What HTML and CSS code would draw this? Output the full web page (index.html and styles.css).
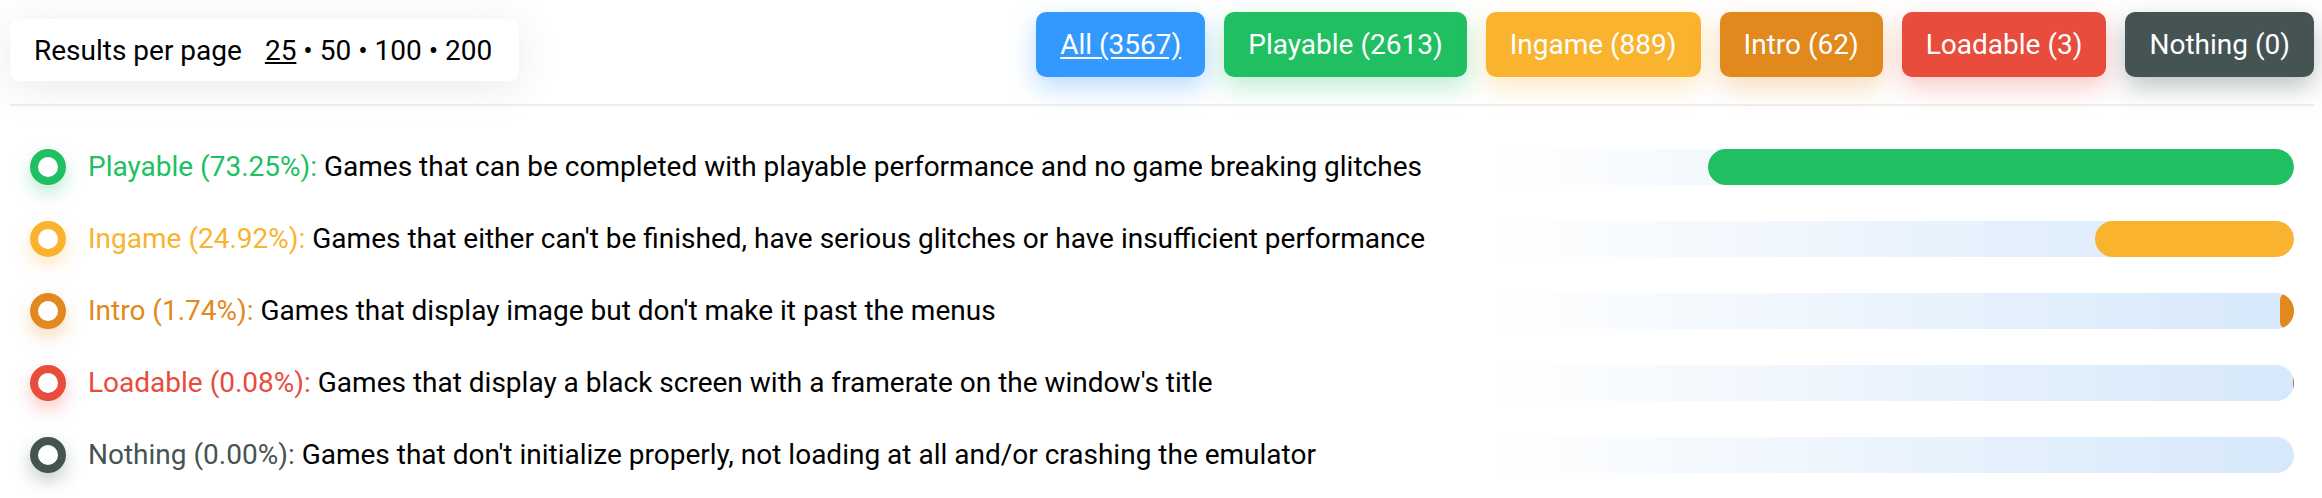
FILE: index.html
```html
<!DOCTYPE html>
<html lang="en">
<head>
    <meta charset="UTF-8">
    <title>Compatibility</title>
    <link rel="stylesheet" href="styles.css">
</head>
<body>
    <div class="page">
        <div class="toolbar">
            <div class="per-page">
                <span class="per-page-label">Results per page</span>
                <span class="per-page-options"><a class="current">25</a> • <a>50</a> • <a>100</a> • <a>200</a></span>
            </div>
            <div class="filters">
                <a class="filter all active">All (3567)</a>
                <a class="filter playable">Playable (2613)</a>
                <a class="filter ingame">Ingame (889)</a>
                <a class="filter intro">Intro (62)</a>
                <a class="filter loadable">Loadable (3)</a>
                <a class="filter nothing">Nothing (0)</a>
            </div>
        </div>

        <ul class="status-list">
            <li class="status playable">
                <span class="dot"></span>
                <p class="status-text"><span class="status-name">Playable (73.25%):</span> Games that can be completed with playable performance and no game breaking glitches</p>
                <div class="track"><div class="fill" style="width: 73.25%"></div></div>
            </li>
            <li class="status ingame">
                <span class="dot"></span>
                <p class="status-text"><span class="status-name">Ingame (24.92%):</span> Games that either can't be finished, have serious glitches or have insufficient performance</p>
                <div class="track"><div class="fill" style="width: 24.92%"></div></div>
            </li>
            <li class="status intro">
                <span class="dot"></span>
                <p class="status-text"><span class="status-name">Intro (1.74%):</span> Games that display image but don't make it past the menus</p>
                <div class="track"><div class="fill" style="width: 1.74%"></div></div>
            </li>
            <li class="status loadable">
                <span class="dot"></span>
                <p class="status-text"><span class="status-name">Loadable (0.08%):</span> Games that display a black screen with a framerate on the window's title</p>
                <div class="track"><div class="fill" style="width: 0.08%"></div></div>
            </li>
            <li class="status nothing">
                <span class="dot"></span>
                <p class="status-text"><span class="status-name">Nothing (0.00%):</span> Games that don't initialize properly, not loading at all and/or crashing the emulator</p>
                <div class="track"><div class="fill" style="width: 0%"></div></div>
            </li>
        </ul>
    </div>
</body>
</html>
```

FILE: styles.css
```css
body {
    font-family: Roboto, "Liberation Sans", sans-serif;
    background-color: #fff;
    color: #000;
    margin: 0;
    padding: 0;
}

.page {
    padding: 0 8px 0 10px;
}

/* top bar */

.toolbar {
    display: flex;
    justify-content: space-between;
    align-items: flex-start;
    padding: 12px 0 23px;
    border-bottom: 2px solid #eeeeee;
}

.per-page {
    display: flex;
    align-items: center;
    gap: 23px;
    height: 62px;
    margin-top: 7px;
    padding: 0 27px 0 24px;
    background-color: #fff;
    border-radius: 9px;
    box-shadow: 0 6px 45px rgba(0, 0, 0, 0.09);
    font-size: 28px;
}

.per-page-options a {
    color: #000;
}

.per-page-options a.current {
    text-decoration: underline;
}

.filters {
    display: flex;
    gap: 19px;
}

.filter {
    display: block;
    padding: 16px 24px;
    line-height: 33px;
    font-size: 28px;
    color: #fff;
    border-radius: 10px;
    text-decoration: none;
    cursor: pointer;
}

.filter.active {
    text-decoration: underline;
    text-underline-offset: 3px;
}

.filter.all { background-color: #3399ff; box-shadow: 0 10px 26px rgba(51, 153, 255, 0.35); }
.filter.playable { background-color: #20bf62; box-shadow: 0 10px 26px rgba(32, 191, 98, 0.3); }
.filter.ingame { background-color: #f9b32f; box-shadow: 0 10px 26px rgba(249, 179, 47, 0.3); }
.filter.intro { background-color: #e1891d; box-shadow: 0 10px 26px rgba(225, 137, 29, 0.3); }
.filter.loadable { background-color: #e74c3c; box-shadow: 0 10px 26px rgba(231, 76, 60, 0.3); }
.filter.nothing { background-color: #455453; box-shadow: 0 10px 26px rgba(69, 84, 83, 0.35); }

/* status rows */

.status-list {
    list-style: none;
    margin: 0;
    padding: 43px 20px 0;
}

.status {
    display: flex;
    align-items: center;
    height: 36px;
    margin-bottom: 36px;
}

.dot {
    flex: none;
    width: 20px;
    height: 20px;
    border: 8px solid;
    border-radius: 50%;
    margin-right: 22px;
}

.status-text {
    flex: 1;
    margin: 0;
    font-size: 28px;
    line-height: 36px;
}

.track {
    flex: none;
    display: flex;
    justify-content: flex-end;
    width: 800px;
    height: 36px;
    border-radius: 0 18px 18px 0;
    overflow: hidden;
    background: linear-gradient(to right, rgba(214, 232, 251, 0), #d6e8fb);
}

.fill {
    height: 100%;
    border-radius: 18px;
}

.playable .status-name { color: #20bf62; }
.playable .dot { border-color: #20bf62; box-shadow: 0 8px 18px rgba(32, 191, 98, 0.3); }
.playable .fill { background-color: #20bf62; }

.ingame .status-name { color: #f9b32f; }
.ingame .dot { border-color: #f9b32f; box-shadow: 0 8px 18px rgba(249, 179, 47, 0.3); }
.ingame .fill { background-color: #f9b32f; }

.intro .status-name { color: #e1891d; }
.intro .dot { border-color: #e1891d; box-shadow: 0 8px 18px rgba(225, 137, 29, 0.3); }
.intro .fill { background-color: #e1891d; }

.loadable .status-name { color: #e74c3c; }
.loadable .dot { border-color: #e74c3c; box-shadow: 0 8px 18px rgba(231, 76, 60, 0.3); }
.loadable .fill { background-color: #e74c3c; }

.nothing .status-name { color: #455453; }
.nothing .dot { border-color: #455453; box-shadow: 0 8px 18px rgba(69, 84, 83, 0.3); }
.nothing .fill { background-color: #455453; }
```
